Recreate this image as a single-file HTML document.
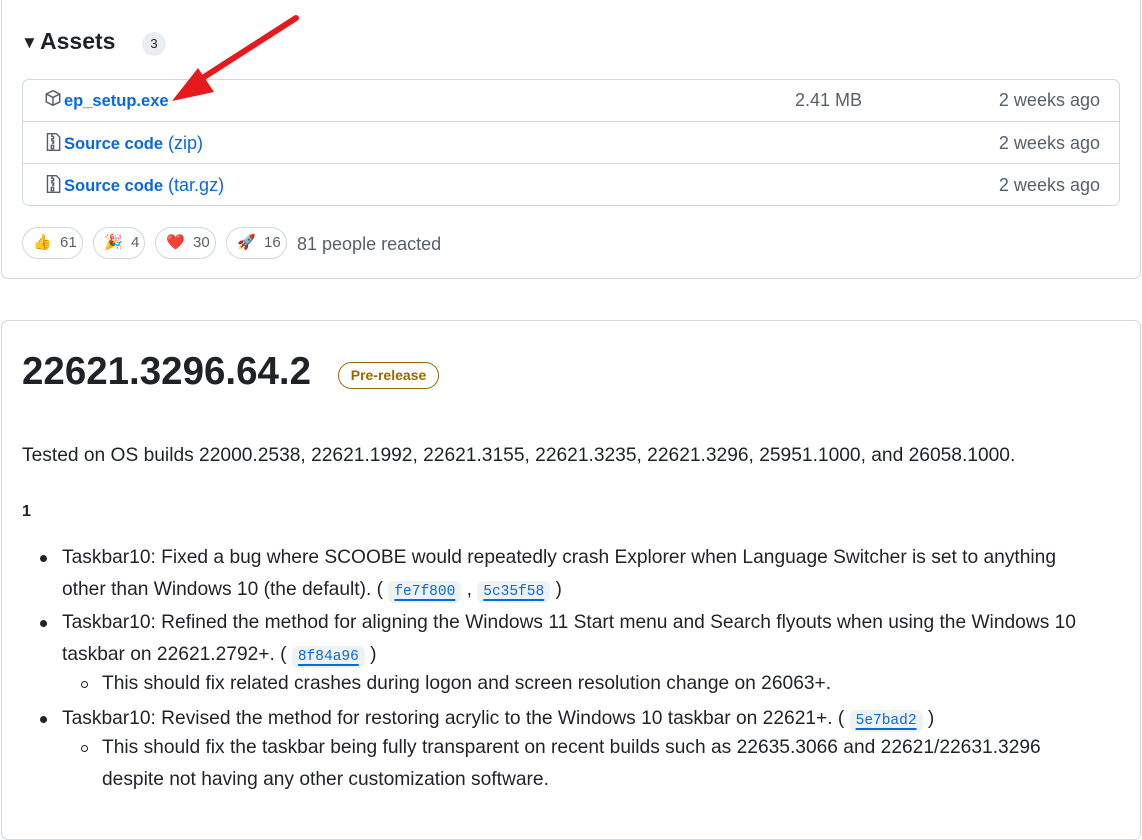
<!DOCTYPE html>
<html><head><meta charset="utf-8"><style>
body{margin:0;width:1142px;height:797px;overflow:hidden;background:#fff;font-family:"Liberation Sans",sans-serif;color:#1f2328;position:relative}
.a{position:absolute;white-space:nowrap}
.card{position:absolute;border:1px solid #d0d7de;border-radius:7px;box-sizing:border-box}
a{color:#0969da;text-decoration:none}
.row{position:absolute;left:0;right:0;height:42px;border-top:1px solid #d0d7de;font-size:18px}
.row b{font-size:16.5px}
.react{position:absolute;top:227px;height:32px;border:1px solid #d0d7de;border-radius:16px;box-sizing:border-box;font-size:15px;color:#57606a;line-height:30px;padding-left:10px}
.t{font-size:19.2px;line-height:32px}
code{font-family:"Liberation Mono",monospace;font-size:14.5px;background:#eff2f5;border-radius:6px;padding:3px 6px;color:#0969da;text-decoration:underline;text-decoration-thickness:2px;text-underline-offset:4px}
.dot{position:absolute;width:7px;height:7px;border-radius:50%;background:#1f2328}
.ring{position:absolute;width:7px;height:7px;border-radius:50%;border:1.3px solid #1f2328;box-sizing:border-box}
</style></head><body>
<div class="card" style="left:1px;top:-10px;width:1140px;height:289px"></div>
<div class="a" style="left:21px;top:33px;font-size:17px">▼</div>
<div class="a" style="left:40px;top:28px;font-size:23px;font-weight:bold">Assets</div>
<div class="a" style="left:142px;top:32px;width:24px;height:24px;border-radius:12px;background:#eaeef2;font-size:13px;text-align:center;line-height:24px">3</div>
<div class="card" style="left:22px;top:79px;width:1098px;height:127px;overflow:hidden">
 <div class="row" style="top:-1px;border-top:none">
  <svg class="a" style="left:21px;top:10px" width="18" height="18" viewBox="0 0 16 16" fill="none" stroke="#57606a" stroke-width="1.3"><path d="M8 1.5l6 3v7l-6 3-6-3v-7z M2 4.5l6 3 6-3 M8 7.5v7"/></svg>
  <a class="a" style="left:41px;top:11px"><b>ep_setup.exe</b></a>
  <span class="a" style="left:772px;top:11px;color:#57606a">2.41 MB</span>
  <span class="a" style="right:19px;top:11px;color:#57606a">2 weeks ago</span>
 </div>
 <div class="row" style="top:41px">
  <svg class="a" style="left:21px;top:10px" width="18" height="20" viewBox="0 0 16 18" fill="none" stroke="#57606a" stroke-width="1.3"><path d="M3 1.5h8l3 3v12H3z M7 2v2h1.5v2H7v2h1.5v2H7 M6.5 12h2v3h-2z"/></svg>
  <a class="a" style="left:41px;top:11px"><b>Source code</b> (zip)</a>
  <span class="a" style="right:19px;top:11px;color:#57606a">2 weeks ago</span>
 </div>
 <div class="row" style="top:83px">
  <svg class="a" style="left:21px;top:10px" width="18" height="20" viewBox="0 0 16 18" fill="none" stroke="#57606a" stroke-width="1.3"><path d="M3 1.5h8l3 3v12H3z M7 2v2h1.5v2H7v2h1.5v2H7 M6.5 12h2v3h-2z"/></svg>
  <a class="a" style="left:41px;top:11px"><b>Source code</b> (tar.gz)</a>
  <span class="a" style="right:19px;top:11px;color:#57606a">2 weeks ago</span>
 </div>
</div>
<div class="react" style="left:22px;width:61px">👍&nbsp; 61</div>
<div class="react" style="left:93px;width:52px">🎉&nbsp; 4</div>
<div class="react" style="left:155px;width:61px">❤️&nbsp; 30</div>
<div class="react" style="left:226px;width:61px">🚀&nbsp; 16</div>
<div class="a" style="left:297px;top:234px;font-size:18px;color:#57606a">81 people reacted</div>
<svg class="a" style="left:0;top:0" width="320" height="120"><path d="M296 18L190 86" stroke="#e8191c" stroke-width="6" stroke-linecap="round"/><path d="M172 101L198 68 214 92z" fill="#e8191c"/></svg>

<div class="card" style="left:1px;top:320px;width:1140px;height:520px"></div>
<div class="a" style="left:22px;top:350px;font-size:38.5px;font-weight:bold">22621.3296.64.2</div>
<div class="a" style="left:338px;top:362px;width:101px;height:27px;border:1px solid #9a6700;border-radius:14px;box-sizing:border-box;color:#9a6700;font-size:14px;text-align:center;line-height:25px;font-weight:600">Pre-release</div>
<div class="a t" style="left:22px;top:440px">Tested on OS builds 22000.2538, 22621.1992, 22621.3155, 22621.3235, 22621.3296, 25951.1000, and 26058.1000.</div>
<div class="a" style="left:22px;top:503px;font-size:16px;font-weight:bold">1</div>
<div class="dot" style="left:40px;top:555px"></div>
<div class="a t" style="left:62px;top:542px">Taskbar10: Fixed a bug where SCOOBE would repeatedly crash Explorer when Language Switcher is set to anything</div>
<div class="a t" style="left:62px;top:574px">other than Windows 10 (the default). ( <code>fe7f800</code> , <code>5c35f58</code> )</div>
<div class="dot" style="left:40px;top:620px"></div>
<div class="a t" style="left:62px;top:607px">Taskbar10: Refined the method for aligning the Windows 11 Start menu and Search flyouts when using the Windows 10</div>
<div class="a t" style="left:62px;top:639px">taskbar on 22621.2792+. ( <code>8f84a96</code> )</div>
<div class="ring" style="left:81px;top:681px"></div>
<div class="a t" style="left:102px;top:668px">This should fix related crashes during logon and screen resolution change on 26063+.</div>
<div class="dot" style="left:40px;top:716px"></div>
<div class="a t" style="left:62px;top:703px">Taskbar10: Revised the method for restoring acrylic to the Windows 10 taskbar on 22621+. ( <code>5e7bad2</code> )</div>
<div class="ring" style="left:81px;top:745px"></div>
<div class="a t" style="left:102px;top:732px">This should fix the taskbar being fully transparent on recent builds such as 22635.3066 and 22621/22631.3296</div>
<div class="a t" style="left:102px;top:764px">despite not having any other customization software.</div>
</body></html>
